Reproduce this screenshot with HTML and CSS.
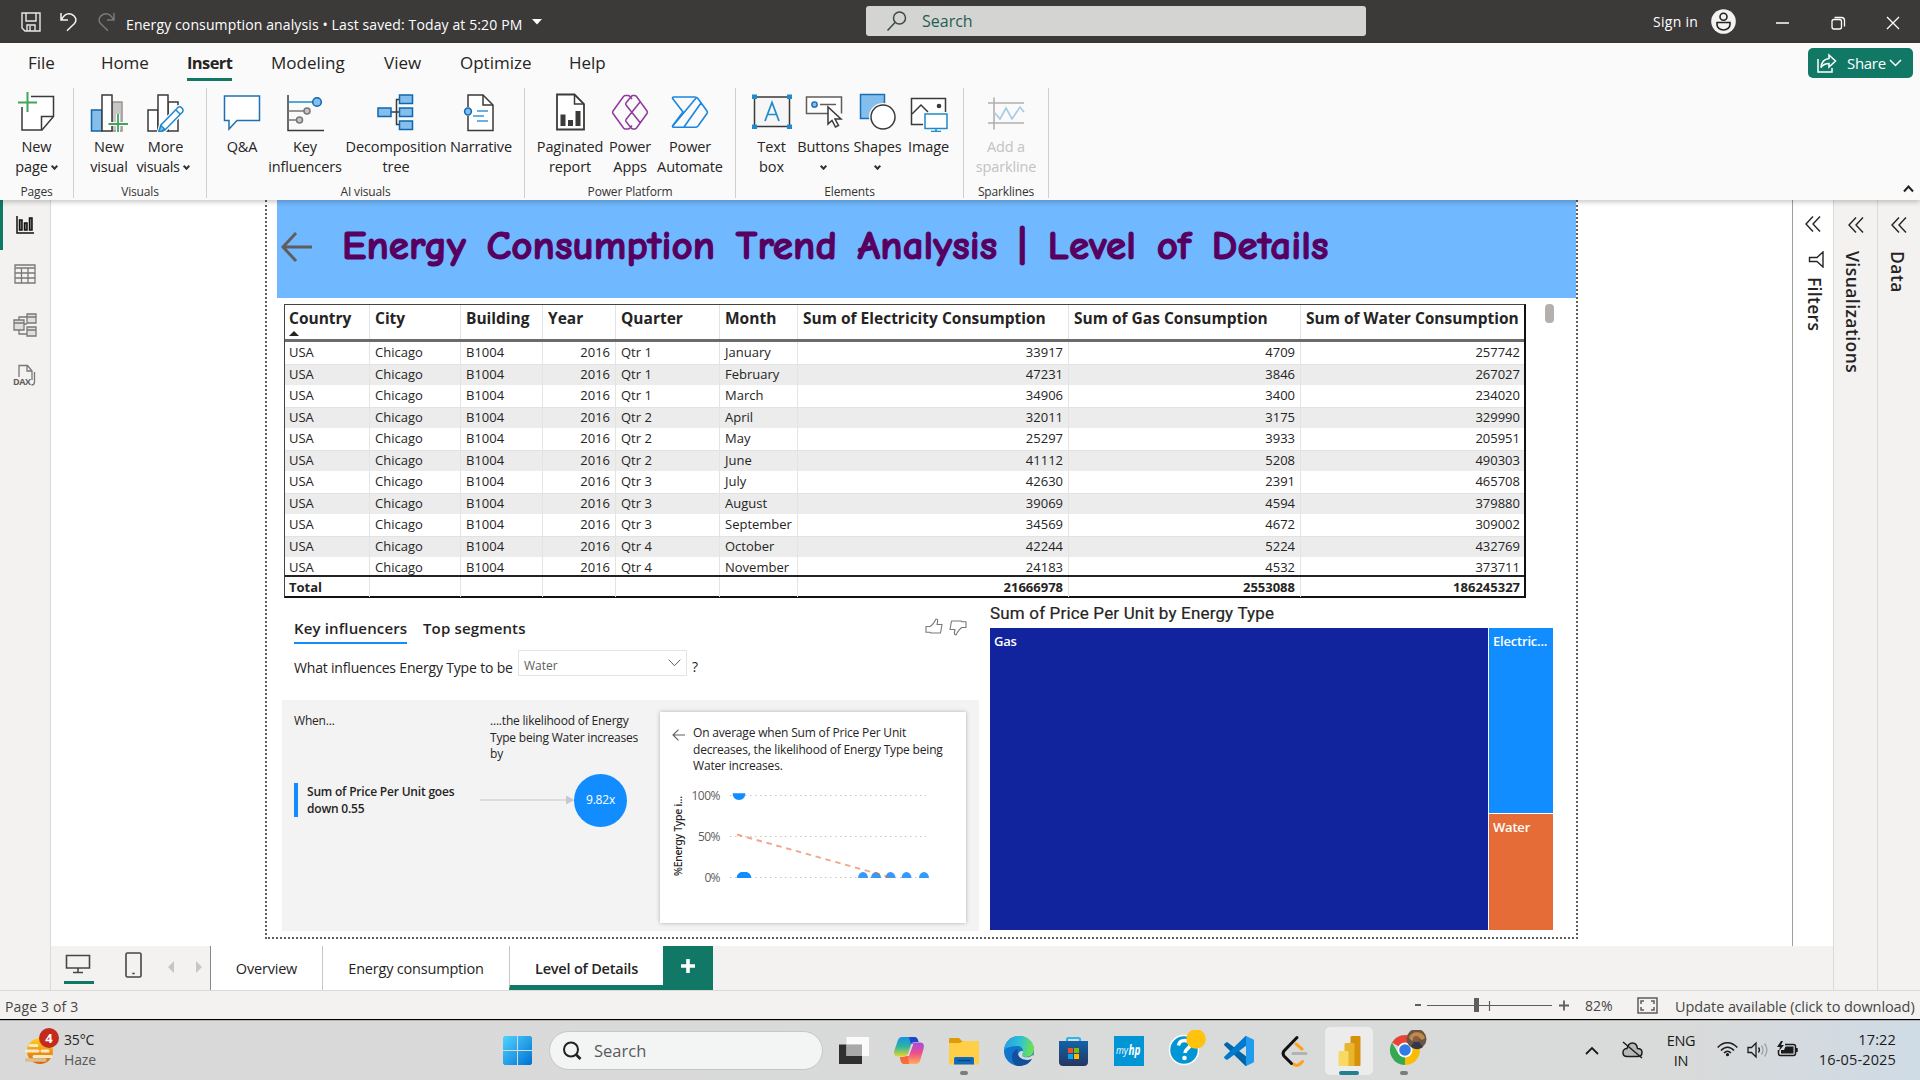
FILE: index.html
```html
<!DOCTYPE html>
<html lang="en">
<head>
<meta charset="utf-8">
<title>Energy consumption analysis</title>
<link rel="stylesheet" href="styles.css">
</head>
<body>
<header class="titlebar">
  <svg class="tb-save" width="20" height="20" viewBox="0 0 20 20" fill="none" stroke="#e8e8e8" stroke-width="1.4"><path d="M1 1h18v18H4l-3-3zM5 1v8h10V1M6 19v-6h8v6M9 14v5"/></svg>
  <svg class="tb-undo" width="18" height="20" viewBox="0 0 18 20" fill="none" stroke="#f3f3f3" stroke-width="1.5"><path d="M1 1v7h7M1.5 7.500C4 3 8 .8 12 2.500c4 1.800 5 6 2.500 9L7 18.800"/></svg>
  <svg class="tb-redo" width="18" height="20" viewBox="0 0 18 20" fill="none" stroke="#7d7b79" stroke-width="1.4"><path d="M17 1v7h-7M16.500 7.500C14 3 10 .8 6 2.500c-4 1.800-5 6-2.500 9L11 18.800"/></svg>
  <span class="doc-title">Energy consumption analysis • Last saved: Today at 5:20 PM</span>
  <svg class="tb-caret" width="10" height="6" viewBox="0 0 10 6"><path fill="#fff" d="M0 0h10L5 5.500z"/></svg>
  <div class="top-search">
    <svg width="22" height="22" viewBox="0 0 22 22" fill="none" stroke="#3b4a45" stroke-width="1.500"><circle cx="13.500" cy="8" r="6"/><path d="M9.300 12.300L1.500 20.500"/></svg>
    <span>Search</span>
  </div>
  <span class="signin">Sign in</span>
  <svg class="avatar" width="25" height="25" viewBox="0 0 25 25"><circle cx="12.500" cy="12.500" r="12.300" fill="#f3f2f1"/><circle cx="12.500" cy="7.700" r="3.500" fill="none" stroke="#222" stroke-width="1.600"/><path d="M6 13.500h13v2a6.500 5.500 0 0 1-13 0z" fill="none" stroke="#222" stroke-width="1.600"/></svg>
  <svg class="win-btns" width="124" height="16" viewBox="0 0 124 16" fill="none" stroke="#fff" stroke-width="1.300"><path d="M0 8h13M111 2l12 12M123 2L111 14"/><rect x="56" y="4.500" width="9.500" height="9.500" rx="2"/><path d="M58.500 2.500h7a3 3 0 0 1 3 3v6"/></svg>
</header>

<div class="ribbon">
  <nav class="ribbon-tabs">
    <span class="t-file">File</span><span class="t-home">Home</span><span class="t-insert active">Insert</span><span class="t-model">Modeling</span><span class="t-view">View</span><span class="t-opt">Optimize</span><span class="t-help">Help</span>
    <button class="share">
      <svg width="20" height="20" viewBox="0 0 20 20" fill="none" stroke="#fff" stroke-width="1.500"><path d="M1 6v13h14v-4"/><path d="M12 2l6.500 6L12 14v-3.500c-4 0-6 1-8 4C4.500 9 7.500 6 12 5.500z"/></svg>
      <span>Share</span>
      <svg width="13" height="8" viewBox="0 0 13 8" fill="none" stroke="#fff" stroke-width="1.500"><path d="M1 1l5.500 5.500L12 1"/></svg>
    </button>
  </nav>
  <div class="groups">
    <section class="group g-pages">
      <div class="buttons">
        <div class="rbtn"><svg width="38" height="40" viewBox="0 0 38 40" fill="none"><path d="M13 4.500h22.500v20L24 38H4V15" stroke="#3b3a39" stroke-width="1.500" fill="#fff"/><path d="M35 24.500H23.500V38" stroke="#3b3a39" stroke-width="1.500"/><path d="M9.500 0v20M0 10.500h19" stroke="#41a55a" stroke-width="2"/></svg><b>New</b><b>page<i class="chev"></i></b></div>
      </div>
      <footer>Pages</footer>
    </section>
    <section class="group g-visuals">
      <div class="buttons">
        <div class="rbtn"><svg width="38" height="40" viewBox="0 0 38 40" fill="none" stroke-width="1.500"><path d="M1.500 18H12v21H1.500z" fill="#83beec" stroke="#1066b0"/><path d="M22 10h10v29H22z" fill="#c8c6c4" stroke="#979593"/><path d="M12 3h10v36H12z" fill="#fff" stroke="#3b3a39"/><path d="M28 22v18M19 32h19" stroke="#fafafa" stroke-width="4"/><path d="M28 22v20M18.500 32H38" stroke="#41a55a" stroke-width="1.800"/></svg><b>New</b><b>visual</b></div>
        <div class="rbtn"><svg width="38" height="40" viewBox="0 0 38 40" fill="none" stroke-width="1.500"><path d="M1 18h10v21H1zM21 10h10v29H21z" fill="#fff" stroke="#3b3a39"/><path d="M11 3h10v36H11z" fill="#fff" stroke="#3b3a39"/><path d="M31 15.500c2-2 6.500 1.500 4.500 4.500L18 38l-6.500 3 2.500-8z" fill="#fff" stroke="#fafafa" stroke-width="4"/><path d="M31 15.500c2-2 6.500 1.500 4.500 4.500L18 38l-6.500 3 2.500-8zM29 18l4.500 4.500" fill="#fff" stroke="#1e8bcd"/><path d="M14 33.500l4 4-6.500 3z" fill="#83beec" stroke="#1e8bcd"/></svg><b>More</b><b class="tight">visuals<i class="chev"></i></b></div>
      </div>
      <footer>Visuals</footer>
    </section>
    <section class="group g-ai">
      <div class="buttons">
        <div class="rbtn"><svg width="38" height="40" viewBox="0 0 38 40" fill="#fff" stroke="#1e6fb4" stroke-width="1.500"><path d="M1.500 4h35v24.500H14L6 37v-8.500H1.500z"/></svg><b>Q&amp;A</b></div>
        <div class="rbtn"><svg width="38" height="40" viewBox="0 0 38 40" fill="none" stroke-width="1.500"><path d="M2 3v35.500h36" stroke="#3b3a39"/><path d="M2 10h25" stroke="#1e8bcd"/><path d="M2 19h17M2 28h9" stroke="#797775"/><circle cx="31" cy="10" r="4.300" fill="#83beec" stroke="#1066b0"/><circle cx="21" cy="19" r="3" fill="#c8c6c4" stroke="#797775"/><circle cx="13.500" cy="28" r="3" fill="#c8c6c4" stroke="#797775"/></svg><b>Key</b><b>influencers</b></div>
        <div class="rbtn"><svg width="38" height="40" viewBox="0 0 38 40" fill="#83beec" stroke="#1066b0" stroke-width="1.500"><path d="M14 20h8M22 7.500h-2.500v25H22" fill="none" stroke="#3b3a39"/><path d="M1 16h13v8.500H1zM22.500 3h13v8.500h-13zM22.500 16h13v8.500h-13zM22.500 29h13v8.500h-13z"/></svg><b>Decomposition</b><b>tree</b></div>
        <div class="rbtn"><svg class="i-narr" width="38" height="40" viewBox="0 0 38 40" fill="none" stroke-width="1.500"><path d="M8 15V3h15l10 10v25.500H8V24" fill="#fff" stroke="#3b3a39"/><path d="M23 3v10h10" stroke="#3b3a39"/><circle cx="8" cy="19.500" r="3.400" fill="#83beec" stroke="#1066b0"/><path d="M17 19h11M13 24h11M17 29h11" stroke="#3a96dd"/></svg><b>Narrative</b></div>
      </div>
      <footer>AI visuals</footer>
    </section>
    <section class="group g-power">
      <div class="buttons">
        <div class="rbtn"><svg width="38" height="40" viewBox="0 0 38 40" fill="none"><path d="M6 2.500h17.500L33 12v25.500H6z" fill="#fff" stroke="#3b3a39" stroke-width="1.800"/><path d="M23.500 2.500V12H33" stroke="#3b3a39" stroke-width="1.500"/><path d="M9.500 22.500h5V34h-5zM17 28h5v6h-5zM24.500 19h5v15h-5z" fill="#3b3a39"/></svg><b>Paginated</b><b>report</b></div>
        <div class="rbtn"><svg width="38" height="40" viewBox="0 0 38 40" fill="none" stroke="#8d3a9b" stroke-width="1.500" stroke-linejoin="round"><path d="M14.500 3.500h2.500c1 0 1.500.4 2 1l2 2.500M14.500 3.500c-.8 0-1.400.4-2 1L2 19c-.7 1-.7 1.500 0 2.500L12.500 36c.6.700 1.200 1 2 1H17c1 0 1.500-.4 2-1l2-2.500M23.500 3.500c1 0 1.500.4 2 1L36 19c.7 1 .7 1.500 0 2.500L25.500 36c-.5.600-1 1-2 1H22c-.8 0-1.300-.4-1.800-1L15 29.500c-.6-.8-.6-1.300 0-2L29 10M23.500 3.500H22c-.8 0-1.300.4-1.800 1L15 11c-.6.800-.6 1.300 0 2l14 17.500"/></svg><b>Power</b><b>Apps</b></div>
        <div class="rbtn"><svg width="38" height="40" viewBox="0 0 38 40" fill="none" stroke="#1a86e0" stroke-width="1.600" stroke-linejoin="round"><path d="M2.500 5H24c1 0 2 .4 2.700 1.300L36 19c.7 1 .7 1.500 0 2.500L27 34c-.8.9-1.500 1.300-2.700 1.300H2.500c-1 0-1.300-1-.7-1.800L12 20 1.800 6.800C1.300 6 1.500 5 2.500 5zM2 33.800L25.500 5.500M30 11L13 35"/></svg><b>Power</b><b>Automate</b></div>
      </div>
      <footer>Power Platform</footer>
    </section>
    <section class="group g-elements">
      <div class="buttons">
        <div class="rbtn"><svg width="40" height="40" viewBox="0 0 40 40" fill="none"><path d="M2.500 5h35v29.500h-35z" fill="#f6f6f6" stroke="#3b3a39" stroke-width="1.500"/><path d="M0 2.500h5v4.500H0zM35 2.500h5v4.500h-5zM0 32.500h5V37H0zM35 32.500h5V37h-5z" fill="#1e8bcd"/><path d="M13 29l7-18.500L27 29M15.500 22.500h9" stroke="#1e8bcd" stroke-width="1.700"/></svg><b>Text</b><b>box</b></div>
        <div class="rbtn"><svg width="38" height="40" viewBox="0 0 38 40" fill="none"><path d="M24 21.500H1.500V5h35v16.500" fill="#fff" stroke="#605e5c" stroke-width="1.500"/><circle cx="9.500" cy="12.500" r="2.700" fill="#83beec" stroke="#1066b0" stroke-width="1.300"/><path d="M15 12.500h16" stroke="#605e5c" stroke-width="1.500"/><path d="M23 15v17l4-3.500 3.500 6.500 3-1.500-3.500-6.500h6z" fill="#fff" stroke="#3b3a39" stroke-width="1.500"/></svg><b>Buttons</b><b><i class="chev solo"></i></b></div>
        <div class="rbtn"><svg width="38" height="40" viewBox="0 0 38 40" fill="none"><path d="M1.500 2.500h24v24h-24z" fill="#83beec" stroke="#1e6fb4" stroke-width="1.500"/><circle cx="24" cy="25" r="14" fill="#fafafa"/><circle cx="24" cy="25" r="12" fill="#fff" stroke="#3b3a39" stroke-width="1.500"/></svg><b>Shapes</b><b><i class="chev solo"></i></b></div>
        <div class="rbtn"><svg width="38" height="40" viewBox="0 0 38 40" fill="none" stroke-width="1.500"><path d="M13 32.500H1.500v-26h34V20" fill="#fff" stroke="#3b3a39"/><path d="M2 22l9-9 7 7" stroke="#3b3a39"/><circle cx="29" cy="14" r="2.300" fill="#3b3a39"/><path d="M15 22h22v14.500H15zM26 36.500V39M21 39.500h10" fill="#fff" stroke="#1e8bcd"/></svg><b>Image</b></div>
      </div>
      <footer>Elements</footer>
    </section>
    <section class="group g-spark">
      <div class="buttons">
        <div class="rbtn off"><svg width="38" height="40" viewBox="0 0 38 40" fill="none" stroke-width="1.600"><path d="M7 5.500v32M1 11h36M1 31h36" stroke="#b3b0ad"/><path d="M7 20l6 7 6-11 6 11 8-12 4 5" stroke="#a6cbe3"/></svg><b>Add a</b><b>sparkline</b></div>
      </div>
      <footer>Sparklines</footer>
    </section>
    <svg class="collapse" width="11" height="8" viewBox="0 0 11 8" fill="none" stroke="#222" stroke-width="2"><path d="M1 6.500l4.500-5 4.500 5"/></svg>
  </div>
</div>

<main class="workspace">
  <nav class="rail">
    <div class="rail-item on"><svg width="20" height="20" viewBox="0 0 20 20" fill="#8a8886" stroke="#111" stroke-width="1.500"><path d="M2 1v17h17" fill="none"/><path d="M4.500 5h2.500v10H4.500zM9.500 8h2.500v7H9.500zM14.500 3H17v12h-2.500z"/></svg></div>
    <div class="rail-item"><svg class="i-grid" width="22" height="20" viewBox="0 0 22 20" fill="none" stroke="#7a7876" stroke-width="1.300"><path d="M1 1h20v18H1zM1 4h20M1 9h20M1 14h20M7.500 4v15M14 4v15"/></svg></div>
    <div class="rail-item"><svg width="24" height="24" viewBox="0 0 24 24" fill="#e1dfdd" stroke="#7a7876" stroke-width="1.300"><path d="M6 7V4h8M6 17v4h8M11 11h3" fill="none"/><path d="M1 7h10v10H1zM14 1h9v9h-9zM14 14h9v9h-9zM1 10h10M14 4h9M14 17h9"/></svg></div>
    <div class="rail-item"><svg width="24" height="24" viewBox="0 0 24 24" fill="none" stroke="#7a7876" stroke-width="1.300"><path d="M6 14V2.500h8.500L19 8v9M14 2.500V8h5M21.500 9v10c0 2-1 3-3 3"/><text x="0" y="22" class="dax" textLength="18">DAX</text></svg></div>
  </nav>

  <div class="center">
    <div class="canvas-row">
      <div class="canvas">
        <div class="page">
          <div class="banner">
            <svg width="31" height="32" viewBox="0 0 31 32" fill="none" stroke="#605e5c" stroke-width="3"><path d="M31 16H2M15 2L2 16l13 14"/></svg>
            <h1>Energy Consumption Trend Analysis | Level of Details</h1>
          </div>
          <div class="table-visual">
            <div class="table">
              <div class="tr head"><span>Country<i class="sort"></i></span><span>City</span><span>Building</span><span>Year</span><span>Quarter</span><span>Month</span><span>Sum of Electricity Consumption</span><span>Sum of Gas Consumption</span><span>Sum of Water Consumption</span></div>
              <div class="rows">
                <div class="tr"><span>USA</span><span>Chicago</span><span>B1004</span><span>2016</span><span>Qtr 1</span><span>January</span><span>33917</span><span>4709</span><span>257742</span></div>
                <div class="tr"><span>USA</span><span>Chicago</span><span>B1004</span><span>2016</span><span>Qtr 1</span><span>February</span><span>47231</span><span>3846</span><span>267027</span></div>
                <div class="tr"><span>USA</span><span>Chicago</span><span>B1004</span><span>2016</span><span>Qtr 1</span><span>March</span><span>34906</span><span>3400</span><span>234020</span></div>
                <div class="tr"><span>USA</span><span>Chicago</span><span>B1004</span><span>2016</span><span>Qtr 2</span><span>April</span><span>32011</span><span>3175</span><span>329990</span></div>
                <div class="tr"><span>USA</span><span>Chicago</span><span>B1004</span><span>2016</span><span>Qtr 2</span><span>May</span><span>25297</span><span>3933</span><span>205951</span></div>
                <div class="tr"><span>USA</span><span>Chicago</span><span>B1004</span><span>2016</span><span>Qtr 2</span><span>June</span><span>41112</span><span>5208</span><span>490303</span></div>
                <div class="tr"><span>USA</span><span>Chicago</span><span>B1004</span><span>2016</span><span>Qtr 3</span><span>July</span><span>42630</span><span>2391</span><span>465708</span></div>
                <div class="tr"><span>USA</span><span>Chicago</span><span>B1004</span><span>2016</span><span>Qtr 3</span><span>August</span><span>39069</span><span>4594</span><span>379880</span></div>
                <div class="tr"><span>USA</span><span>Chicago</span><span>B1004</span><span>2016</span><span>Qtr 3</span><span>September</span><span>34569</span><span>4672</span><span>309002</span></div>
                <div class="tr"><span>USA</span><span>Chicago</span><span>B1004</span><span>2016</span><span>Qtr 4</span><span>October</span><span>42244</span><span>5224</span><span>432769</span></div>
                <div class="tr"><span>USA</span><span>Chicago</span><span>B1004</span><span>2016</span><span>Qtr 4</span><span>November</span><span>24183</span><span>4532</span><span>373711</span></div>
              </div>
              <div class="tr total"><span>Total</span><span></span><span></span><span></span><span></span><span></span><span>21666978</span><span>2553088</span><span>186245327</span></div>
            </div>
            <div class="scroll-thumb"></div>
          </div>
          <div class="bottom-row">
            <section class="influencers">
              <div class="ki-tabs">
                <span class="ki-on">Key influencers</span><span class="ki-top">Top segments</span>
                <svg class="thumbs" width="42" height="18" viewBox="0 0 42 18" fill="none" stroke="#797775" stroke-width="1.100" stroke-linejoin="round"><path d="M1 8.500h4C8 7 9 5 11 1c2 .2 2 1.500 1 5.500h5L15.500 15H6l-1-.7H1zM41 9.500h-4c-3 1.500-4 3.500-6 7.500-2-.2-2-1.500-1-5.500h-5L26.500 3H36l1 .7h4z"/></svg>
              </div>
              <div class="question"><span class="q">What influences Energy Type to be</span><span class="select">Water<svg width="13" height="8" viewBox="0 0 13 8" fill="none" stroke="#605e5c"><path d="M.7.700l5.800 6L12.300.7"/></svg></span><span class="qm">?</span></div>
              <div class="ki-body">
                <div class="ki-left">
                  <div class="ki-heads"><span class="when">When...</span><p>....the likelihood of Energy<br>Type being Water increases<br>by</p></div>
                  <div class="ki-factor">
                    <p>Sum of Price Per Unit goes<br>down 0.55</p>
                    <svg width="95" height="12" viewBox="0 0 95 12"><path d="M0 6h87" stroke="#dcdcdc" stroke-width="2"/><path d="M86 1.500l8.500 4.500L86 10.500z" fill="#c8c8c8"/></svg>
                    <span class="bubble">9.82x</span>
                  </div>
                </div>
                <div class="ki-card">
                  <div class="card-text"><svg width="13" height="12" viewBox="0 0 13 12" fill="none" stroke="#605e5c" stroke-width="1.100"><path d="M13 6H1M6.500.700L1 6l5.500 5.300"/></svg><p>On average when Sum of Price Per Unit<br>decreases, the likelihood of Energy Type being<br>Water increases.</p></div>
                  <svg class="plot" width="280" height="110" viewBox="670 785 280 110">
                    <g stroke="#c8c6c4" stroke-dasharray="1.500 3.500"><path d="M730 795.500h196M730 836.500h196M730 877.500h196"/></g>
                    <g class="axis"><text x="691.500" y="799.500" textLength="29">100%</text><text x="698" y="840.500" textLength="22.500">50%</text><text x="704.500" y="882" textLength="16">0%</text></g>
                    <text class="ylab" transform="translate(681.500 876) rotate(-90)" textLength="80">%Energy Type i...</text>
                    <g fill="#118dff"><path d="M732.700 793.300h12.600c0 4-2.500 6.700-6.300 6.700s-6.300-2.700-6.300-6.700z"/><path d="M736.700 878c0-3.500 2.500-6 5.500-6h3.500c3 0 5.500 2.500 5.500 6z"/></g>
                    <g fill="#329bff"><path d="M858 878a5 6 0 0 1 10 0zM871 878a5 6 0 0 1 10 0zM885.500 878a5 6 0 0 1 10 0zM901.500 878a5 6 0 0 1 10 0zM919 878a5 6 0 0 1 10 0z"/></g>
                    <path d="M737 834.500L891 877.500" stroke="#e66c37" stroke-opacity=".6" stroke-width="1.900" stroke-dasharray="5.500 4.700"/>
                  </svg>
                </div>
              </div>
            </section>
            <section class="treemap">
              <h2>Sum of Price Per Unit by Energy Type</h2>
              <div class="tiles"><div class="gas">Gas</div><div class="elec">Electric...</div><div class="water">Water</div></div>
            </section>
          </div>
        </div>
      </div>
      <aside class="pane filters">
        <svg width="16" height="16" viewBox="0 0 16 16" fill="none" stroke="#252423" stroke-width="1.400"><path d="M8 .5L1 8l7 7.500M15 .5L8 8l7 7.500"/></svg>
        <svg class="funnel" width="16" height="17" viewBox="0 0 16 17" fill="none" stroke="#252423" stroke-width="1.400"><path d="M15 1v15L9 10.500H1.500v-4H9z"/></svg>
        <span>Filters</span>
      </aside>
    </div>
    <div class="page-tabs">
      <div class="view-desktop"><svg width="26" height="20" viewBox="0 0 26 20" fill="none" stroke="#484644" stroke-width="1.600"><path d="M1.500 1.500h23v12.500h-23zM13 14v4M8 18.500h10"/></svg></div>
      <svg class="view-phone" width="17" height="26" viewBox="0 0 17 26" fill="none" stroke="#484644" stroke-width="1.600"><rect x="1" y="1" width="15" height="24" rx="1.500"/><path d="M7.300 21.500h2.400"/></svg>
      <svg class="page-arrows" width="34" height="12" viewBox="0 0 34 12" fill="#c8c6c4"><path d="M6 0v12L0 6zM28 0v12l6-6z"/></svg>
      <span class="ptab p1">Overview</span><span class="ptab p2">Energy consumption</span><span class="ptab p3">Level of Details</span>
      <span class="add"><svg width="14" height="14" viewBox="0 0 14 14"><path d="M7 0v14M0 7h14" stroke="#fff" stroke-width="3.600"/></svg></span>
    </div>
  </div>
  <aside class="pane viz">
    <svg width="16" height="16" viewBox="0 0 16 16" fill="none" stroke="#252423" stroke-width="1.400"><path d="M8 .5L1 8l7 7.500M15 .5L8 8l7 7.500"/></svg>
    <span>Visualizations</span>
  </aside>
  <aside class="pane data">
    <svg width="16" height="16" viewBox="0 0 16 16" fill="none" stroke="#252423" stroke-width="1.400"><path d="M8 .5L1 8l7 7.500M15 .5L8 8l7 7.500"/></svg>
    <span>Data</span>
  </aside>
</main>

<div class="status">
  <span class="page-no">Page 3 of 3</span>
  <svg class="zoom" width="156" height="18" viewBox="0 0 156 18" fill="none" stroke="#605e5c"><path d="M1 8h6" stroke-width="2"/><path d="M13 8.500h125M75.500 4v10" stroke-width="1.200"/><path d="M60 1h5v14h-5z" fill="#605e5c" stroke="none"/><path d="M145 8.500h10M150 3.500v10" stroke-width="1.800"/></svg>
  <span class="pct">82%</span>
  <svg class="fit" width="21" height="17" viewBox="0 0 21 17" fill="none" stroke="#605e5c" stroke-width="1.500"><path d="M1 1h19v15H1z"/><path d="M4 7V4h3M14 4h3v3M17 10v3h-3M7 13H4v-3"/></svg>
  <span class="update">Update available (click to download)</span>
</div>

<footer class="taskbar">
  <svg class="weather" width="38" height="40" viewBox="0 0 38 40"><defs><linearGradient id="sun" x1="0" y1="0" x2="0" y2="1"><stop offset="0" stop-color="#ffd21a"/><stop offset="1" stop-color="#e2600b"/></linearGradient></defs><circle cx="15" cy="23" r="13" fill="url(#sun)"/><path d="M5 17.500h7M0 23h13M17 23h6M9 28.500h17" stroke="#f7e9c8" stroke-width="3" stroke-linecap="round"/><path d="M1 32h19" stroke="#d8bf90" stroke-width="3.500" stroke-linecap="round"/><circle cx="24" cy="10" r="10" fill="#c42b1c"/><text x="20.300" y="15" class="badge">4</text></svg>
  <div class="temp"><span>35°C</span><span class="haze">Haze</span></div>
  <svg class="start" width="30" height="30" viewBox="0 0 30 30"><defs><linearGradient id="win" x1="0" y1="0" x2="1" y2="1"><stop offset="0" stop-color="#50d4ff"/><stop offset="1" stop-color="#0070d2"/></linearGradient></defs><path fill="url(#win)" d="M1.500 0H14v14H0V1.500zM15 0h12.500L29 1.500V14H15zM0 15h14v14H1.500L0 27.500zM15 15h14v12.500L27.500 29H15z"/></svg>
  <div class="task-search"><svg width="20" height="20" viewBox="0 0 20 20" fill="none" stroke="#222" stroke-width="2"><circle cx="9" cy="8.500" r="7"/><path d="M14 13.500l4.500 4.500" stroke-width="2.600"/></svg><span>Search</span></div>
  <div class="apps">
    <div><svg width="32" height="32" viewBox="0 0 32 32"><path fill="#2f2f2f" d="M1 9.500h23V29H1z"/><path fill="#fff" fill-opacity=".88" d="M8.500 2H31v19H8.500z"/><path fill="#a9a9a9" d="M8.500 9.500H24V21H8.500z"/></svg></div>
    <div><svg width="32" height="32" viewBox="0 0 32 32"><defs><linearGradient id="cpa" x1="0" y1="0" x2="0" y2="1"><stop offset="0" stop-color="#1592e6"/><stop offset=".5" stop-color="#2fb5a0"/><stop offset="1" stop-color="#e8d62a"/></linearGradient><linearGradient id="cpb" x1="0" y1="0" x2="0" y2="1"><stop offset="0" stop-color="#a44be0"/><stop offset=".5" stop-color="#ee4f8a"/><stop offset="1" stop-color="#ffb055"/></linearGradient></defs><path d="M9 2h12c3 0 4 2 4.500 5h-4c-2 0-3 1-3.700 3L15 18c-1 2.500-2 3.500-5 3.500H5C1 21.500.5 18 1.500 15L5 5c.8-2 2-3 4-3z" fill="url(#cpa)"/><path d="M16 2h5c3 0 4 2 4.500 5h-4c-2 0-3 1-3.500 2.500z" fill="#1f46c8"/><path d="M23 29H11c-2 0-3.500-2-4-7h3c3 0 4-1 5-3.500l3-8c.7-2 1.700-3 3.700-3H27c4 0 4.500 3 3.500 6.500L27 26c-.8 2-2 3-4 3z" fill="url(#cpb)"/><path d="M16 29h-5c-2 0-3.500-2-4-7h3c3 0 4-1 4.500-2.500z" fill="#f4632e" opacity=".8"/><path d="M18.500 9h1.800l-4.300 12h-3.500c1.500-.5 2.200-1.500 2.800-3z" fill="#dcdcdc"/></svg></div>
    <div class="run"><svg width="32" height="32" viewBox="0 0 32 32"><path fill="#dc9b09" d="M1 4.500C1 3.500 1.500 3 2.500 3H11l3 3h16v10H1z"/><path fill="#ffcf48" d="M1 8h11l3-2h14.500c1 0 1.500.5 1.500 1.500V28c0 1-.5 1.500-1.500 1.500h-27C1.500 29.500 1 29 1 28z"/><path fill="#0f6cbd" d="M6 29.500V24c0-1.500.8-2 2-2h16c1.200 0 2 .5 2 2v5.500z"/><path d="M9.500 25.500h13" stroke="#0a3f78" stroke-width="1.400"/></svg></div>
    <div><svg width="32" height="32" viewBox="0 0 32 32"><defs><linearGradient id="ed" x1="0" y1="0" x2="1" y2=".2"><stop offset="0" stop-color="#2698e8"/><stop offset=".6" stop-color="#30c5cf"/><stop offset="1" stop-color="#6bdf57"/></linearGradient></defs><circle cx="16" cy="16" r="15" fill="#1175ce"/><path fill="url(#ed)" d="M1 15C2 6 8 1 16 1c9 0 15 6 15 13 0 5-3.500 8-8 8-2.500 0-4.500-1-4.500-2 0-.8 1.500-1.500 1.500-4 0-3-2.500-5-6-5-5 0-10 1-13 4z"/><path fill="#d9dbda" d="M19 16c2 0 .5 2.500 0 4 0 1.500 2 2.300 5 2.300 2 0 4-.8 5.500-2.300L32 23l-3 1.500c-5 1-12 .5-13.500-4C14.700 18 17 16 19 16z"/><path fill="#134f9a" d="M9 22c0-4 2-7 6-8-2 5 1 10 7 11 2.500.4 5 0 7-1-3 5-8 7-13 7-4 0-7-4-7-9z"/></svg></div>
    <div><svg width="32" height="32" viewBox="0 0 32 32"><defs><linearGradient id="st" x1="0" y1="0" x2="0" y2="1"><stop offset="0" stop-color="#1462a8"/><stop offset="1" stop-color="#253561"/></linearGradient></defs><path d="M9 7V4.500c0-1 .5-1.500 1.500-1.500h10c1 0 1.500.5 1.500 1.500V7" fill="none" stroke="#2cb5ef" stroke-width="2.200"/><path fill="url(#st)" d="M1 6h29v21c0 2.500-1.500 4-4 4H5c-2.500 0-4-1.500-4-4z"/><path fill="#f25022" d="M10 13h5v5h-5z"/><path fill="#7fba00" d="M16 13h5v5h-5z"/><path fill="#00a4ef" d="M10 19h5v5h-5z"/><path fill="#ffb900" d="M16 19h5v5h-5z"/></svg></div>
    <div class="myhp"><svg width="32" height="32" viewBox="0 0 32 32"><path fill="#0096d6" d="M1 1h30v30H1z"/><text x="3" y="19" class="my" textLength="12" lengthAdjust="spacingAndGlyphs">my</text><text x="15.500" y="19.500" class="hp" textLength="12" lengthAdjust="spacingAndGlyphs">hp</text></svg></div>
    <div class="badged"><svg width="38" height="38" viewBox="-3 -4 38 38"><circle cx="13" cy="16" r="14.500" fill="#0096d6" stroke="#fff" stroke-width="1.500"/><path d="M7.500 11.500C8 8 10 6.500 13.500 6.500c3.500 0 5.500 2 5.500 4.500 0 3.500-5 4-5 8" fill="none" stroke="#fff" stroke-width="3.500"/><circle cx="13.500" cy="24" r="2.300" fill="#fff"/><circle cx="25" cy="5" r="9.800" fill="#ffc20e"/></svg></div>
    <div><svg width="32" height="32" viewBox="0 0 32 32"><path fill="#0065a9" d="M1.500 10.500c-.6-.6-.6-1.200 0-1.800L3 7.500c.6-.5 1.200-.4 1.800 0L24 22v8.500L22.500 31z"/><path fill="#007acc" d="M1.500 21.500c-.6.600-.6 1.200 0 1.800L3 24.500c.6.500 1.200.4 1.800 0L24 10V1.500L22.500 1z"/><path fill="#1f9cf0" d="M23 1l7 3.200c.7.300 1 .8 1 1.500v20.600c0 .7-.3 1.200-1 1.500L23 31z"/></svg></div>
    <div class="leet"><svg width="32" height="32" viewBox="0 0 32 32" fill="none" stroke-linecap="round" stroke-width="3"><path d="M13 29c3 2 6 1.500 8-1l1.500-1.500M16 9l6 5" stroke="#ffa116"/><path d="M13 18.500h13" stroke="#b3b3b3"/><path d="M17 2.500L4 16c-1.500 2-1.500 3 0 5l7.500 7.500" stroke="#111"/></svg></div>
    <div class="on"><svg width="32" height="32" viewBox="0 0 32 32"><path fill="#d6900c" d="M17.500 2.500c0-1 .5-1.500 1.500-1.500h7c1 0 1.500.5 1.500 1.500V30c0 .7-.5 1-1 1h-9z"/><path fill="#e9b52a" d="M11.500 9.500c0-1 .5-1.500 1.500-1.500h7c1 0 1.500.5 1.500 1.500V31h-10z"/><path fill="#f7d964" d="M5.500 17.500c0-1 .5-1.500 1.500-1.500h7c1 0 1.500.5 1.500 1.500V31h-9c-.5 0-1-.3-1-1z"/></svg></div>
    <div class="run badged"><svg width="38" height="38" viewBox="-3 -4 38 38"><path fill="#ea4335" d="M13 16L0 8.500a15 15 0 0 1 26 0z"/><path fill="#fbbc04" d="M13 16h0l13-7.500A15 15 0 0 1 13 31z"/><path fill="#34a853" d="M13 16L13 31A15 15 0 0 1 0 8.500l6.500 11.200z"/><circle cx="13" cy="16" r="7.500" fill="#fff"/><circle cx="13" cy="16" r="5.800" fill="#317be5"/><circle cx="24.500" cy="5" r="10" fill="#6b5546"/><path d="M17 4c2-7 13-8 16 0l-3 2-5-4-5 5z" fill="#c08a4a"/><path d="M19 12l4-5 4 1 4 5c-4 3-9 3-12-1z" fill="#33394d"/><circle cx="24" cy="5" r="3" fill="#8c5c40"/></svg></div>
  </div>
  <div class="tray">
    <svg width="14" height="9" viewBox="0 0 14 9" fill="none" stroke="#1b1b1b" stroke-width="1.800"><path d="M1 8l6-6 6 6"/></svg>
    <svg class="cloud" width="21" height="18" viewBox="0 0 21 18" fill="none" stroke="#1b1b1b" stroke-width="1.500"><path d="M5 15.500C2.500 15.500 1 14 1 11.500S3 7.500 5 7.500C6 3.500 8 2 10.500 2S15 4 15.500 7.500c2.500 0 4.500 1.500 4.500 4s-2 4-4.500 4z" fill="#b8b8b8"/><path d="M1 1l19 16"/></svg>
    <div class="lang"><span>ENG</span><span>IN</span></div>
    <svg class="wifi" width="21" height="16" viewBox="0 0 21 16" fill="none" stroke="#1b1b1b" stroke-width="1.500"><path d="M.7 6.500c5.500-6.500 14-6.500 19.600 0M4 9.500c4-4.500 9-4.500 13 0M7 12c2.300-2.500 4.700-2.500 7 0"/><circle cx="10.500" cy="13.700" r="1.600" fill="#1b1b1b" stroke="none"/></svg>
    <svg class="sound" width="21" height="18" viewBox="0 0 21 18" fill="none" stroke="#1b1b1b" stroke-width="1.300"><path d="M1 6.500h3.500L9 2v14l-4.500-4.500H1zM11.500 6.500c1.200 1.500 1.200 3.500 0 5"/><path d="M14.500 4.500c2 2.500 2 6.500 0 9M17.500 2.500c3 4 3 9 0 13" stroke="#a0a0a0"/></svg>
    <svg class="batt" width="22" height="18" viewBox="0 0 22 18" fill="none" stroke="#1b1b1b" stroke-width="1.500"><path d="M8 3.500h8.500c1.200 0 2 .8 2 2v7c0 1.200-.8 2-2 2h-13c-1.200 0-2-.8-2-2V9"/><path d="M4 9h3l1.500-3.500H16.500V12.500H4z" fill="#1b1b1b" stroke="none"/><path d="M19.500 7v4" stroke-width="2.500"/><path d="M4 0L0 6h3l-1 4 5-6H4l2-4z" fill="#1b1b1b" stroke="none"/></svg>
    <div class="clock"><span>17:22</span><span class="date">16-05-2025</span></div>
  </div>
</footer>
</body>
</html>
```

FILE: styles.css
```css
* { box-sizing: border-box; }
body {
  margin: 0; width: 1920px; height: 1080px; overflow: hidden;
  display: flex; flex-direction: column;
  font-family: "Open Sans", "Noto Sans", sans-serif; font-size: 14px; color: #252423; background: #fff;
}
svg { display: block; flex: none; }
span, p, h1, h2, b { white-space: nowrap; }
p, h1, h2 { margin: 0; }

/* Title bar */
.titlebar { height: 43px; flex: none; background: #3b3a39; color: #fff; display: flex; align-items: center; padding-left: 21px; }
.tb-undo { margin-left: 19px; }
.tb-redo { margin-left: 19px; }
.doc-title { margin-left: 11px; width: 398px; font-size: 14px; letter-spacing: .12px; padding-top: 5px; }
.tb-caret { margin-left: 8px; }
.top-search { margin-left: 324px; margin-top: -1px; width: 500px; height: 30px; border-radius: 3px; background: #d4d4d2; display: flex; align-items: center; padding-left: 20px; gap: 14px; color: #1f5f53; font-size: 16px; }
.signin { margin-left: 287px; width: 46px; font-size: 14px; letter-spacing: .3px; }
.avatar { margin-left: 12px; }
.win-btns { margin-left: 40px; margin-top: 2px; }

/* Ribbon */
.ribbon { height: 157px; flex: none; background: #fafafa; position: relative; z-index: 2; box-shadow: 0 2px 5px rgba(0,0,0,.22); display: flex; flex-direction: column; }
.ribbon-tabs { height: 45px; display: flex; align-items: flex-start; padding-left: 28px; font-size: 17px; line-height: 24px; }
.ribbon-tabs > span { height: 38px; padding-top: 8px; margin-right: 39px; }
.ribbon-tabs .active { font-weight: 700; font-size: 16.500px; border-bottom: 3px solid #117865; }
.ribbon-tabs .t-file { width: 26px; margin-right: 47px; }
.ribbon-tabs .t-home { width: 46px; margin-right: 40px; letter-spacing: -.1px; }
.ribbon-tabs .t-insert { width: 45px; letter-spacing: -.6px; }
.ribbon-tabs .t-model { width: 73px; margin-right: 40px; }
.ribbon-tabs .t-view { width: 37px; }
.ribbon-tabs .t-opt { width: 70px; }
.ribbon-tabs .t-help { width: 36px; margin-right: 0; }
.share { margin: 5px 7px 0 auto; width: 105px; height: 30px; border: 0; border-radius: 5px; background: #117865; color: #fff; font: 15px "Open Sans", sans-serif; display: flex; align-items: center; padding: 0 0 1px 9px; gap: 0; }
.share span { width: 40px; margin: 0 2px 0 10px; letter-spacing: -.3px; text-align: left; }
.groups { height: 112px; display: flex; }
.group { height: 110px; border-right: 1px solid #d2d0ce; display: flex; flex-direction: column; align-items: center; }
.group footer { font-size: 12px; line-height: 15px; letter-spacing: -.15px; color: #333; }
.buttons { display: grid; height: 96px; flex: none; padding-top: 4px; }
.g-pages { width: 74px; } .g-visuals { width: 133px; } .g-ai { width: 318px; } .g-power { width: 211px; } .g-elements { width: 228px; } .g-spark { width: 85px; }
.g-visuals .buttons { grid-template-columns: 55px 58px; margin-right: 4px; }
.g-ai .buttons { grid-template-columns: 52px 74px 108px 62px; margin-right: 3px; }
.g-power .buttons { grid-template-columns: 68px 52px 68px; }
.g-elements .buttons { grid-template-columns: 50px 54px 54px 48px; }
.rbtn { display: flex; flex-direction: column; align-items: center; min-width: 0; }
.rbtn b { font-weight: 400; font-size: 14.500px; line-height: 20px; height: 20px; letter-spacing: -.12px; }
.rbtn .tight { letter-spacing: -.3px; margin-right: 5px; }
.rbtn svg { margin-bottom: 5px; }
.rbtn.off { color: #c4c2c0; }
.i-narr { margin-right: 5px; }
.chev { display: inline-block; width: 5px; height: 5px; border: solid #333; border-width: 0 2px 2px 0; transform: rotate(45deg); margin: 0 1px 3px 4px; }
.chev.solo { margin-left: 0; }
.collapse { margin: 97px 6px 0 auto; }

/* Workspace */
.workspace { height: 790px; flex: none; display: flex; }
.rail { width: 51px; background: #f3f2f1; border-right: 1px solid #dcdad8; display: flex; flex-direction: column; }
.rail-item { height: 50px; display: flex; align-items: center; justify-content: center; padding-bottom: 1px; }
.rail-item.on { border-left: 3px solid #117865; padding-right: 3px; }
.i-grid { margin-top: -2px; }
.dax { font: 700 9px "Open Sans", sans-serif; fill: #605e5c; stroke: none; }
.center { width: 1782px; display: flex; flex-direction: column; }
.canvas-row { height: 746px; display: flex; }
.canvas { width: 1741px; padding-left: 214px; background: #fff; }
.page { width: 1313px; height: 739px; border: 2px dotted #605e5c; border-top: 0; }
.banner { margin-left: 10px; width: 1299px; height: 98px; background: #70b8ff; display: flex; align-items: flex-start; padding-left: 4px; }
.banner svg { margin-top: 31px; }
.banner h1 { margin-left: 30px; font: 700 41px/92px "Comic Sans MS", "Comic Neue", Lato, sans-serif; color: #570060; letter-spacing: .1px; word-spacing: 6px; -webkit-text-stroke: 1.100px #570060; }

/* Table visual */
.table-visual { display: flex; margin: 6px 0 0 17px; }
.table { width: 1242px; height: 294px; border: 1px solid #444; border-right: 2px solid #111; border-bottom: 2px solid #111; }
.tr { display: grid; grid-template-columns: 85px 91px 82px 73px 104px 78px 271px 232px 1fr; height: 21.500px; font-size: 13px; line-height: 21px; }
.tr span { padding: 0 5px 0 5px; border-right: 1px solid #e4e4e4; }
.tr span:first-child { padding-left: 4px; }
.tr span:last-child { border-right: 0; padding-right: 4px; }
.tr span:nth-child(4), .tr span:nth-child(n+7) { text-align: right; }
.tr.head { height: 37px; border-bottom: 3px solid #6b6b6b; font-size: 15.500px; line-height: 27px; font-weight: 700; letter-spacing: 0; }
.tr.head span { text-align: left; padding-right: 0; }
.sort { display: block; width: 0; border: 5.500px solid transparent; border-top: 0; border-bottom: 5px solid #252423; margin-top: -1px; }
.rows { height: 233px; overflow: hidden; }
.rows .tr:nth-child(even) { background: #ececec; box-shadow: inset 0 1px #e2e2e2; }
.tr.total { border-top: 2px solid #222; font-weight: 700; height: 22px; line-height: 20px; }
.scroll-thumb { width: 9px; height: 19px; border-radius: 4px; background: #b3b0ad; margin-left: 19px; }

/* Bottom visuals */
.bottom-row { display: flex; margin-left: 15px; gap: 10px; height: 333px; }
.influencers { width: 697px; display: flex; flex-direction: column; }
.ki-tabs { height: 45px; display: flex; padding: 19px 0 0 12px; font-size: 15px; font-weight: 600; line-height: 23px; letter-spacing: .15px; }
.ki-on { width: 113px; height: 27px; border-bottom: 2px solid #118dff; margin-right: 16px; }
.ki-top { width: 103px; }
.thumbs { margin: 1px 12px 0 auto; }
.question { height: 57px; display: flex; padding-left: 12px; font-size: 14px; line-height: 23px; }
.q { width: 224px; padding-top: 13px; letter-spacing: -.18px; }
.select { width: 169px; height: 26px; margin-top: 7px; border: 1px solid #e4e4e4; display: flex; justify-content: space-between; align-items: center; padding: 6px 5px 2px 5px; font-size: 12px; color: #605e5c; }
.select svg { margin-bottom: 4px; }
.qm { margin-left: 5px; padding-top: 12px; }
.ki-body { height: 231px; background: #f3f3f3; display: flex; }
.ki-left { width: 378px; padding: 13px 0 0 12px; font-size: 12px; line-height: 16.600px; letter-spacing: -.2px; }
.ki-heads { display: flex; height: 70px; }
.when { width: 196px; }
.ki-factor { display: flex; align-items: center; height: 34px; }
.ki-factor p { width: 186px; border-left: 4px solid #118dff; padding-left: 9px; padding-top: 1px; font-weight: 600; letter-spacing: -.2px; }
.bubble { width: 53px; height: 53px; border-radius: 50%; background: #118dff; color: #fff; display: flex; align-items: center; justify-content: center; margin-left: -1px; }
.ki-card { width: 306px; height: 211px; margin-top: 12px; background: #fff; box-shadow: 0 0 4px rgba(0,0,0,.28); padding: 13px 10px 0 12px; }
.card-text { display: flex; gap: 8px; font-size: 12px; line-height: 16.500px; height: 60px; letter-spacing: -.18px; }
.card-text svg { margin-top: 4px; }
.plot { margin-left: -2px; }
.axis text { font: 12px "Open Sans", sans-serif; fill: #605e5c; }
.ylab { font: 500 10.500px "Noto Sans", sans-serif; fill: #252423; }
.treemap { width: 564px; }
.treemap h2 { height: 30px; font: 400 17px/31px Roboto, sans-serif; letter-spacing: .17px; padding-left: 1px; -webkit-text-stroke: .2px #252423; }
.tiles { display: grid; grid-template: 185px 116px / 498px 64px; gap: 1px; height: 302px; margin-left: 1px; color: #fff; font-size: 13px; font-weight: 600; line-height: 18px; letter-spacing: -.2px; }
.tiles div { padding: 4px 0 0 4px; }
.gas { grid-row: 1 / 3; background: #12239e; }
.elec { background: #118dff; }
.water { background: #e66c37; }

/* Side panes */
.pane { display: flex; flex-direction: column; align-items: center; padding-top: 17px; background: #f3f2f1; }
.pane span { writing-mode: vertical-rl; font-size: 17.500px; font-weight: 600; line-height: 22px; letter-spacing: .45px; }
.filters { width: 41px; background: #fff; border-left: 1px solid #a19f9d; padding-top: 16px; }
.filters .funnel { margin: 19px 0 9px 5px; }
.filters span { margin-left: 3px; letter-spacing: .3px; }
.viz, .data { width: 44px; border-left: 1px solid #dcdad8; }
.data { width: 43px; }
.viz span { margin-top: 18px; margin-right: 5px; }
.data span { margin-top: 18px; margin-right: 2px; }

/* Page tabs */
.page-tabs { height: 44px; background: #f3f2f1; display: flex; }
.view-desktop { margin-left: 13px; width: 30px; height: 38px; border-bottom: 3px solid #117865; padding: 8px 0 0 1px; }
.view-phone { margin: 6px 0 0 31px; }
.page-arrows { margin: 15px 8px 0 26px; }
.ptab { background: #fff; border-left: 1px solid #c8c6c4; display: flex; justify-content: center; align-items: center; font-size: 14.500px; letter-spacing: -.2px; padding-top: 1px; }
.p1 { width: 112px; border-color: #8a8886; }
.p2 { width: 187px; }
.p3 { width: 154px; font-weight: 600; border-bottom: 5px solid #117865; padding-top: 6px; }
.add { width: 50px; background: #117865; display: flex; align-items: center; justify-content: center; padding-bottom: 4px; }

/* Status bar */
.status { height: 30px; flex: none; background: #f3f2f1; border-top: 1px solid #dcdad8; border-bottom: 1px solid #000; display: flex; align-items: center; padding-left: 5px; color: #484644; font-size: 14px; }
.page-no { width: 80px; padding-top: 3px; letter-spacing: .15px; }
.zoom { margin-left: 1329px; margin-top: 1px; }
.pct { margin-left: 15px; width: 30px; font-size: 14px; }
.fit { margin-left: 22px; margin-top: 1px; }
.update { margin-left: 17px; font-size: 14.500px; letter-spacing: -.08px; padding-top: 3px; }

/* Taskbar */
.taskbar { height: 60px; flex: none; display: flex; align-items: center; background: linear-gradient(90deg, #d9d9d9 0, #d9dada 80%, #d9dada 88%, #cfdbe6 100%); border-top: 1px solid #b5b5b5; padding-left: 25px; }
.weather { margin-top: -5px; }
.badge { font: 700 13px "Open Sans", sans-serif; fill: #fff; }
.temp { width: 50px; margin: -2px 0 0 1px; display: flex; flex-direction: column; line-height: 20px; font-size: 14px; letter-spacing: -.15px; }
.haze { color: #5a5a5a; }
.start { margin-left: 389px; }
.task-search { margin-left: 16px; width: 274px; height: 39px; border-radius: 20px; background: #f3f4f4; border: 1px solid #c6c6c6; display: flex; align-items: center; padding-left: 13px; gap: 12px; color: #5a5a5a; font-size: 16.500px; }
.task-search svg { margin-left: -1px; }
.apps { margin-left: 7px; display: flex; gap: 7px; }
.apps > div { width: 48px; height: 48px; display: flex; align-items: center; justify-content: center; border-radius: 5px; position: relative; }
.apps .badged svg { margin-left: 6px; margin-top: -3px; }
.apps .run.badged svg { margin-left: 8px; }
.apps .leet svg { margin-left: 4px; }
.apps .on { background: #ececec; }
.apps .run::after, .apps .on::after { content: ""; position: absolute; bottom: 0; width: 8px; height: 4px; border-radius: 2px; background: #7c7c7c; }
.apps .on::after { width: 20px; background: #23808f; }
.myhp svg { overflow: visible; }
.my { font: italic 11px "Open Sans", sans-serif; fill: #fff; }
.hp { font: italic 700 15px "Open Sans", sans-serif; fill: #fff; }
.tray { margin-left: auto; padding-right: 24px; display: flex; align-items: center; font-size: 14.500px; line-height: 20px; color: #1b1b1b; }
.cloud { margin: -2px 0 0 23px; }
.lang { margin: 0 0 0 22px; width: 32px; display: flex; flex-direction: column; align-items: center; letter-spacing: -.3px; }
.wifi { margin: -3px 0 0 20px; }
.sound { margin: -2px 0 0 9px; }
.batt { margin: -2px 0 0 9px; }
.clock { margin: -2px 0 0 18px; width: 79px; display: flex; flex-direction: column; align-items: flex-end; letter-spacing: .15px; }
```
